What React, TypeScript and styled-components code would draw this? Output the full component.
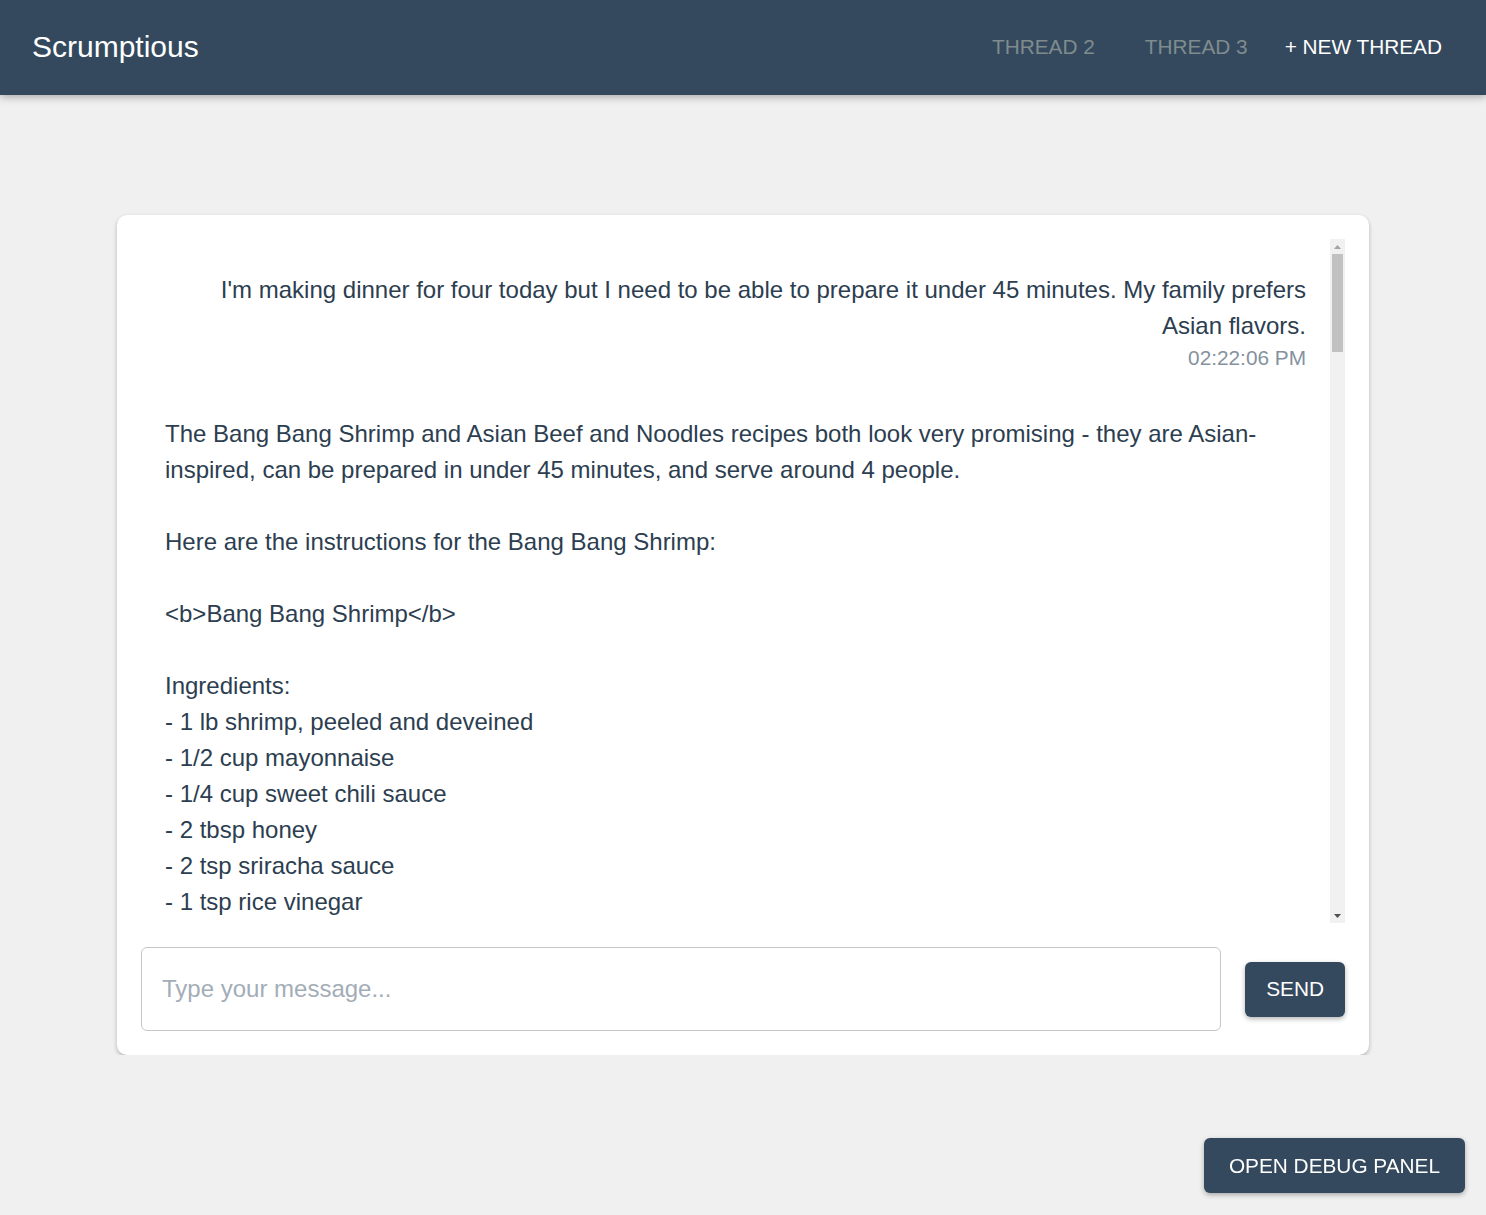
import React from "react";
import styled, { createGlobalStyle } from "styled-components";

const GlobalStyle = createGlobalStyle`
  html, body { margin: 0; padding: 0; }
  body {
    background: #f0f0f0;
    font-family: "Liberation Sans", Arial, sans-serif;
    color: #2c3e50;
  }
  * { box-sizing: border-box; }
`;

const Header = styled.header`
  height: 95px;
  background: #34495e;
  display: flex;
  align-items: center;
  justify-content: space-between;
  padding: 0 32px 2px;
  box-shadow: 0 2px 8px rgba(0, 0, 0, 0.3);
  position: relative;
  z-index: 1;
`;

const Title = styled.h1`
  margin: 0;
  font-size: 30px;
  font-weight: 400;
  color: #ffffff;
`;

const Nav = styled.nav`
  display: flex;
  align-items: center;
`;

const NavItem = styled.button<{ $primary?: boolean }>`
  background: none;
  border: none;
  font-family: inherit;
  font-size: 20.8px;
  text-transform: uppercase;
  cursor: pointer;
  padding: 8px ${(p) => (p.$primary ? "12px" : "25px")};
  color: ${(p) => (p.$primary ? "#ffffff" : "#7f8c8d")};
`;

const Main = styled.main`
  padding-top: 120px;
`;

const Card = styled.section`
  width: 1252px;
  margin: 0 auto;
  background: #ffffff;
  border-radius: 10px;
  padding: 24px;
  box-shadow: 0 2px 4px rgba(0, 0, 0, 0.25);
`;

const ScrollArea = styled.div`
  display: flex;
  height: 684px;
`;

const MessageList = styled.div`
  flex: 1;
  min-width: 0;
  overflow-y: auto;
  scrollbar-width: none;
  padding: 17px 0 16px;
  &::-webkit-scrollbar { display: none; }
`;

const ScrollTrack = styled.div`
  width: 15px;
  flex: none;
  background: #f1f1f1;
  display: flex;
  flex-direction: column;
`;

const ScrollButton = styled.div`
  height: 15px;
  flex: none;
  display: flex;
  align-items: center;
  justify-content: center;
`;

const ScrollSpace = styled.div`
  flex: 1;
`;

const ScrollThumb = styled.div`
  height: 98px;
  margin: 0 2px;
  background: #c1c1c1;
`;

const Message = styled.div<{ $user?: boolean }>`
  display: flex;
  flex-direction: column;
  align-items: ${(p) => (p.$user ? "flex-end" : "flex-start")};
  text-align: ${(p) => (p.$user ? "right" : "left")};
  padding: 16px 24px;
  margin-bottom: 12px;
`;

const MessageText = styled.div`
  font-size: 24px;
  line-height: 36px;
  white-space: pre-wrap;
  color: #2c3e50;
`;

const Timestamp = styled.div`
  font-size: 20.8px;
  line-height: 28px;
  color: #85929e;
`;

const InputRow = styled.div`
  display: flex;
  align-items: center;
  gap: 24px;
  margin-top: 24px;
`;

const Input = styled.input`
  flex: 1;
  height: 84px;
  border: 1px solid #c6c6c6;
  border-radius: 6px;
  padding: 0 20px;
  font-family: inherit;
  font-size: 24px;
  color: #2c3e50;
  outline: none;
  &::placeholder { color: #a3adb7; }
`;

const SendButton = styled.button`
  height: 55px;
  padding: 0 21px;
  background: #34495e;
  color: #ffffff;
  border: none;
  border-radius: 6px;
  font-family: inherit;
  font-size: 20.8px;
  box-shadow: 0 2px 5px rgba(0, 0, 0, 0.3);
  cursor: pointer;
`;

const DebugButton = styled.button`
  position: fixed;
  right: 21px;
  bottom: 22px;
  height: 55px;
  padding: 0 25px;
  background: #34495e;
  color: #ffffff;
  border: none;
  border-radius: 6px;
  font-family: inherit;
  font-size: 20.8px;
  box-shadow: 0 2px 5px rgba(0, 0, 0, 0.3);
  cursor: pointer;
`;

type Msg = { user: boolean; text: string; time: string };

const messages: Msg[] = [
  {
    user: true,
    text: "I'm making dinner for four today but I need to be able to prepare it under 45 minutes. My family prefers Asian flavors.",
    time: "02:22:06 PM",
  },
  {
    user: false,
    time: "02:22:31 PM",
    text: `The Bang Bang Shrimp and Asian Beef and Noodles recipes both look very promising - they are Asian-inspired, can be prepared in under 45 minutes, and serve around 4 people.

Here are the instructions for the Bang Bang Shrimp:

<b>Bang Bang Shrimp</b>

Ingredients:
- 1 lb shrimp, peeled and deveined
- 1/2 cup mayonnaise
- 1/4 cup sweet chili sauce
- 2 tbsp honey
- 2 tsp sriracha sauce
- 1 tsp rice vinegar
- 1/2 cup cornstarch
- 2 large eggs, beaten
- 1 cup panko breadcrumbs
- Vegetable oil, for frying
- 2 green onions, thinly sliced
- Lettuce leaves, for serving

Instructions:
1. In a small bowl, whisk together the mayonnaise, sweet chili sauce, honey, sriracha and rice vinegar until smooth. Set the sauce aside.
2. Pat the shrimp dry with paper towels and season lightly with salt and pepper.
3. Set up a breading station: place the cornstarch, beaten eggs and panko breadcrumbs in three separate shallow bowls.
4. Dredge each shrimp in cornstarch, dip it in the egg, then press it into the panko until fully coated.
5. Heat about 2 inches of vegetable oil in a large, heavy pot to 350°F.
6. Fry the shrimp in batches for 2-3 minutes, until golden brown and crispy. Transfer to a paper towel-lined plate to drain.
7. Toss the fried shrimp in the sauce until evenly coated.
8. Serve immediately over lettuce leaves, garnished with sliced green onions.

Prep time: 15 minutes
Cook time: 15 minutes
Total time: 30 minutes
Servings: 4

And here are the instructions for the Asian Beef and Noodles:

<b>Asian Beef and Noodles</b>

Ingredients:
- 8 oz lo mein or spaghetti noodles
- 1 lb flank steak, thinly sliced against the grain
- 1 tbsp cornstarch
- 2 tbsp vegetable oil
- 3 cloves garlic, minced
- 1 tbsp fresh ginger, grated
- 1 red bell pepper, thinly sliced
- 2 cups broccoli florets
- 1 carrot, julienned
- 1/3 cup low-sodium soy sauce
- 2 tbsp oyster sauce
- 1 tbsp brown sugar
- 1 tsp sesame oil
- 2 green onions, sliced
- Sesame seeds, for garnish

Instructions:
1. Cook the noodles according to package directions. Drain, rinse under cold water and set aside.
2. Toss the sliced beef with the cornstarch until lightly coated.
3. In a small bowl, stir together the soy sauce, oyster sauce, brown sugar and sesame oil.
4. Heat 1 tbsp of the oil in a large skillet or wok over high heat. Add the beef in a single layer and sear for 2-3 minutes per side until browned. Remove to a plate.
5. Add the remaining oil, then the garlic and ginger, and cook for 30 seconds until fragrant.
6. Add the bell pepper, broccoli and carrot and stir-fry for 3-4 minutes until crisp-tender.
7. Return the beef to the pan along with the noodles and sauce. Toss everything together for 1-2 minutes until heated through and well coated.
8. Garnish with green onions and sesame seeds and serve hot.

Prep time: 15 minutes
Cook time: 20 minutes
Total time: 35 minutes
Servings: 4

Both dishes pair nicely with steamed jasmine rice or a simple cucumber salad. Let me know if you would like any substitutions or a shopping list!`,
  },
  {
    user: true,
    text: "Can you give me a shopping list for both?",
    time: "02:23:12 PM",
  },
  {
    user: false,
    time: "02:23:30 PM",
    text: `Of course! Here is a combined shopping list for both recipes:

Produce:
- 4 green onions
- 1 head of garlic
- 1 small piece of fresh ginger
- 1 red bell pepper
- 1 head of broccoli
- 1 carrot
- 1 head of butter lettuce

Meat & Seafood:
- 1 lb shrimp
- 1 lb flank steak

Pantry:
- Mayonnaise, sweet chili sauce, sriracha
- Honey, brown sugar, rice vinegar
- Soy sauce, oyster sauce, sesame oil
- Cornstarch, panko breadcrumbs, vegetable oil
- 8 oz lo mein noodles, sesame seeds

Dairy:
- 2 large eggs`,
  },
];

const ArrowUp = () => (
  <svg width="7" height="4" viewBox="0 0 7 4">
    <polygon points="0,4 3.5,0 7,4" fill="#a3a3a3" />
  </svg>
);

const ArrowDown = () => (
  <svg width="7" height="4" viewBox="0 0 7 4">
    <polygon points="0,0 7,0 3.5,4" fill="#505050" />
  </svg>
);

export default function App() {
  return (
    <>
      <GlobalStyle />
      <Header>
        <Title>Scrumptious</Title>
        <Nav>
          <NavItem>Thread 2</NavItem>
          <NavItem>Thread 3</NavItem>
          <NavItem $primary>+ New Thread</NavItem>
        </Nav>
      </Header>
      <Main>
        <Card>
          <ScrollArea>
            <MessageList>
              {messages.map((m, i) => (
                <Message key={i} $user={m.user}>
                  <MessageText>{m.text}</MessageText>
                  <Timestamp>{m.time}</Timestamp>
                </Message>
              ))}
            </MessageList>
            <ScrollTrack>
              <ScrollButton>
                <ArrowUp />
              </ScrollButton>
              <ScrollThumb />
              <ScrollSpace />
              <ScrollButton>
                <ArrowDown />
              </ScrollButton>
            </ScrollTrack>
          </ScrollArea>
          <InputRow>
            <Input placeholder="Type your message..." />
            <SendButton>SEND</SendButton>
          </InputRow>
        </Card>
      </Main>
      <DebugButton>OPEN DEBUG PANEL</DebugButton>
    </>
  );
}
